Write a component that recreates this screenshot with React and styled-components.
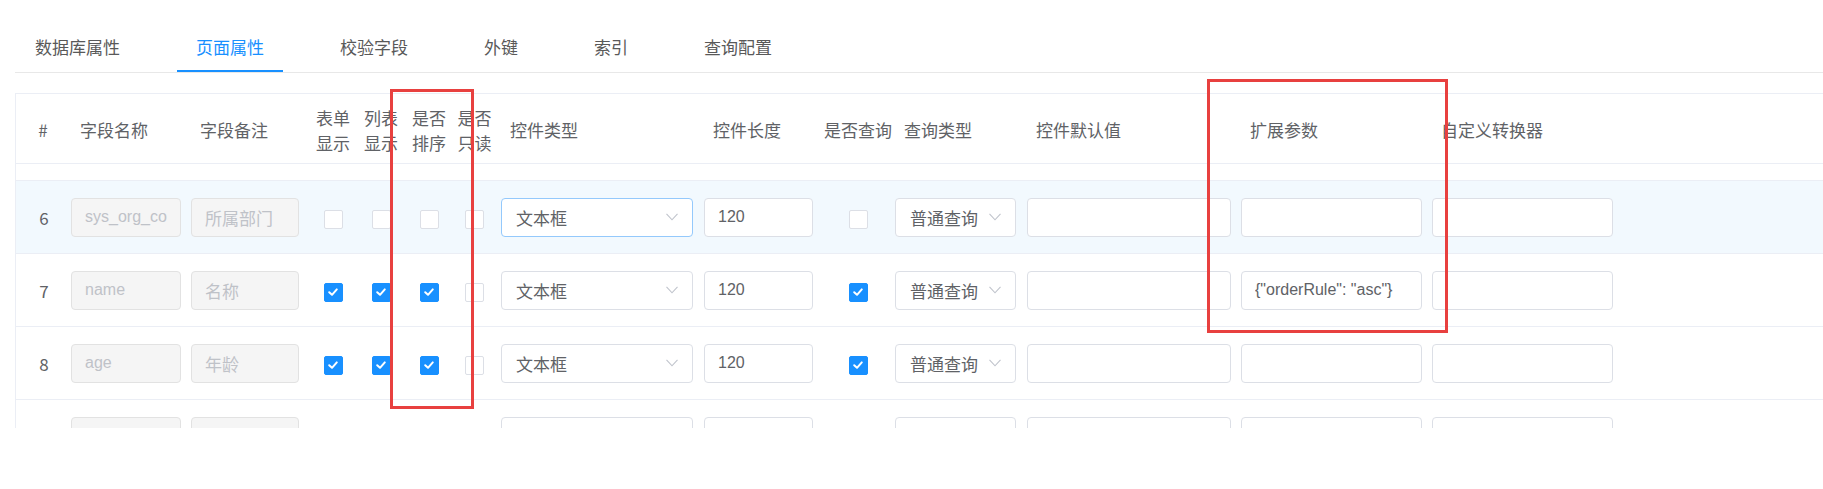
import React, { useLayoutEffect, useRef } from 'react'
import styled, { createGlobalStyle, css } from 'styled-components'

const GlobalStyle = createGlobalStyle`
    html, body {
        margin: 0;
        padding: 0;
        background: #fff;
        font-family: "Noto Sans CJK SC", "Noto Sans", sans-serif;
    }
`

// column layout of the field grid: width, left padding, header offset
const columns = [
    { key: 'no', w: 50, label: '#', center: true },
    { key: 'name', w: 120, pad: 5, label: '字段名称' },
    { key: 'remark', w: 123, pad: 5, label: '字段备注' },
    { key: 'form', w: 48, label: '表单\n显示', center: true },
    { key: 'list', w: 48, label: '列表\n显示', center: true },
    { key: 'sort', w: 48, label: '是否\n排序', center: true },
    { key: 'readonly', w: 43, label: '是否\n只读', center: true },
    { key: 'type', w: 203, pad: 5, label: '控件类型' },
    { key: 'length', w: 122, pad: 5, label: '控件长度' },
    { key: 'query', w: 74, label: '是否查询', center: true },
    { key: 'queryType', w: 127, pad: 0, label: '查询类型' },
    { key: 'default', w: 214, pad: 5, label: '控件默认值' },
    { key: 'ext', w: 191, pad: 5, label: '扩展参数' },
    { key: 'converter', w: 191, pad: 5, label: '自定义转换器' },
]

const gridTemplate = columns.map(c => c.w + 'px').join(' ') + ' 1fr'

// rows 1-4 are scrolled out of view, row 5 only shows its bottom edge
const rows = [
    { no: 5, name: 'update_time', remark: '更新日期' },
    { no: 6, name: 'sys_org_code', remark: '所属部门', hover: true, typeFocus: true },
    { no: 7, name: 'name', remark: '名称', form: true, list: true, sort: true, query: true, ext: '{"orderRule": "asc"}' },
    { no: 8, name: 'age', remark: '年龄', form: true, list: true, sort: true, query: true },
    { no: 9, name: 'sex', remark: '性别' },
]

const Page = styled.div`
    position: relative;
    padding: 27px 0 0 15px;
    height: 489px;
    box-sizing: border-box;
    overflow: hidden;
`

const TabBar = styled.div`
    display: flex;
    height: 46px;
    box-sizing: border-box;
    border-bottom: 1px solid #e8e8e8;
    padding-left: 1px;
`

const Tab = styled.div`
    position: relative;
    height: 45px;
    box-sizing: border-box;
    padding: 0 19px;
    margin-right: 38px;
    line-height: 40px;
    font-size: 17px;
    color: ${p => p.$active ? '#1890ff' : '#595959'};

    ${p => p.$active && css`
        &::after {
            content: '';
            position: absolute;
            left: 0;
            right: 0;
            bottom: 0;
            height: 2px;
            background: #1890ff;
        }
    `}
`

const Table = styled.div`
    margin-top: 20px;
    border-top: 1px solid #ebeef5;
    border-left: 1px solid #ebeef5;
`

const HeaderRow = styled.div`
    display: grid;
    grid-template-columns: ${gridTemplate};
    height: 70px;
    box-sizing: border-box;
    padding-top: 2px;
    border-bottom: 1px solid #ebeef5;
    color: #606266;
    font-size: 17px;
`

const HeaderCell = styled.div`
    display: flex;
    align-items: center;
    justify-content: ${p => p.$center ? 'center' : 'flex-start'};
    padding-left: ${p => p.$center ? 0 : p.$pad + 9}px;
    text-align: ${p => p.$center ? 'center' : 'left'};
    line-height: 25px;
    white-space: pre-line;
    ${p => p.$key === 'no' && css`padding-left: 4px;`}
`

const Body = styled.div`
    height: 264px;
    overflow: hidden;
`

const Row = styled.div`
    display: grid;
    grid-template-columns: ${gridTemplate};
    height: 73px;
    box-sizing: border-box;
    border-bottom: 1px solid #ebeef5;
    background: ${p => p.$hover ? '#f2f9fe' : '#fff'};
`

const Cell = styled.div`
    display: flex;
    align-items: center;
    justify-content: ${p => p.$center ? 'center' : 'flex-start'};
    padding-left: ${p => p.$pad || 0}px;
    min-width: 0;
`

const RowNo = styled.span`
    padding-left: 6px;
    font-size: 17px;
    color: #606266;
`

const TextInput = styled.input`
    box-sizing: border-box;
    width: ${p => p.$w}px;
    height: 39px;
    padding: 0 13px;
    border: 1px solid #dcdfe6;
    border-radius: 4px;
    background: #fff;
    font-family: "Liberation Sans", "Noto Sans CJK SC", sans-serif;
    font-size: ${p => p.$cjk ? 17 : 16}px;
    color: #606266;
    outline: none;

    &:disabled {
        background: #f5f5f5;
        border-color: #e2e2e2;
        color: #bfc2c8;
        -webkit-text-fill-color: #bfc2c8;
        opacity: 1;
    }
`

const SelectBox = styled.div`
    box-sizing: border-box;
    width: ${p => p.$w}px;
    height: 39px;
    display: flex;
    align-items: center;
    justify-content: space-between;
    padding: 0 14px 0 14px;
    border: 1px solid ${p => p.$focus ? '#94c9fc' : '#dcdfe6'};
    border-radius: 4px;
    background: #fff;
    font-size: 17px;
    color: #606266;
    white-space: nowrap;

    svg {
        flex-shrink: 0;
    }
`

const Check = styled.span`
    box-sizing: border-box;
    width: 19px;
    height: 19px;
    margin-top: 4px;
    display: inline-flex;
    align-items: center;
    justify-content: center;
    border: 1px solid ${p => p.$checked ? '#1890ff' : '#dcdfe6'};
    border-radius: 2px;
    background: ${p => p.$checked ? '#1890ff' : '#fff'};
`

const Highlight = styled.div`
    position: absolute;
    box-sizing: border-box;
    border: 3px solid #e8403f;
    pointer-events: none;
`

const Arrow = () => (
    <svg width="12" height="8" viewBox="0 0 12 8">
        <polyline points="0.5,0.8 6,6.8 11.5,0.8" fill="none" stroke="#c0c4cc" strokeWidth="1.1" />
    </svg>
)

const Checkbox = ({ checked }) => (
    <Check $checked={checked}>
        {checked && (
            <svg width="12" height="12" viewBox="0 0 12 12">
                <polyline points="2.2,6.2 5,8.8 9.8,3.4" fill="none" stroke="#fff" strokeWidth="2" strokeLinecap="round" strokeLinejoin="round" />
            </svg>
        )}
    </Check>
)

const FieldRow = ({ row }) => (
    <Row $hover={row.hover}>
        <Cell $center><RowNo>{row.no}</RowNo></Cell>
        <Cell $pad={5}><TextInput $w={110} disabled value={row.name} readOnly /></Cell>
        <Cell $pad={5}><TextInput $w={108} $cjk disabled value={row.remark} readOnly /></Cell>
        <Cell $center><Checkbox checked={row.form} /></Cell>
        <Cell $center><Checkbox checked={row.list} /></Cell>
        <Cell $center><Checkbox checked={row.sort} /></Cell>
        <Cell $center><Checkbox checked={row.readonly} /></Cell>
        <Cell $pad={5}>
            <SelectBox $w={192} $focus={row.typeFocus}>文本框<Arrow /></SelectBox>
        </Cell>
        <Cell $pad={5}><TextInput $w={109} value="120" readOnly /></Cell>
        <Cell $center><Checkbox checked={row.query} /></Cell>
        <Cell>
            <SelectBox $w={121}>普通查询<Arrow /></SelectBox>
        </Cell>
        <Cell $pad={5}><TextInput $w={204} value="" readOnly /></Cell>
        <Cell $pad={5}><TextInput $w={181} value={row.ext || ''} readOnly /></Cell>
        <Cell $pad={5}><TextInput $w={181} value="" readOnly /></Cell>
        <Cell />
    </Row>
)

const tabs = ['数据库属性', '页面属性', '校验字段', '外键', '索引', '查询配置']

const App = () => {
    const bodyRef = useRef(null)

    // scroll the body so only the last 17px of row 5 stay above row 6
    useLayoutEffect(() => {
        if (bodyRef.current) bodyRef.current.scrollTop = 56
    }, [])

    return (
        <Page>
            <GlobalStyle />
            <TabBar>
                {tabs.map((t, i) => (
                    <Tab key={t} $active={i === 1}>{t}</Tab>
                ))}
            </TabBar>

            <Table>
                <HeaderRow>
                    {columns.map(c => (
                        <HeaderCell key={c.key} $key={c.key} $center={c.center} $pad={c.pad || 0}>
                            {c.label}
                        </HeaderCell>
                    ))}
                    <HeaderCell />
                </HeaderRow>
                <Body ref={bodyRef}>
                    {rows.map(r => <FieldRow key={r.no} row={r} />)}
                </Body>
            </Table>

            <Highlight style={{ left: 390, top: 89, width: 84, height: 320 }} />
            <Highlight style={{ left: 1207, top: 79, width: 241, height: 254 }} />
        </Page>
    )
}

export default App
